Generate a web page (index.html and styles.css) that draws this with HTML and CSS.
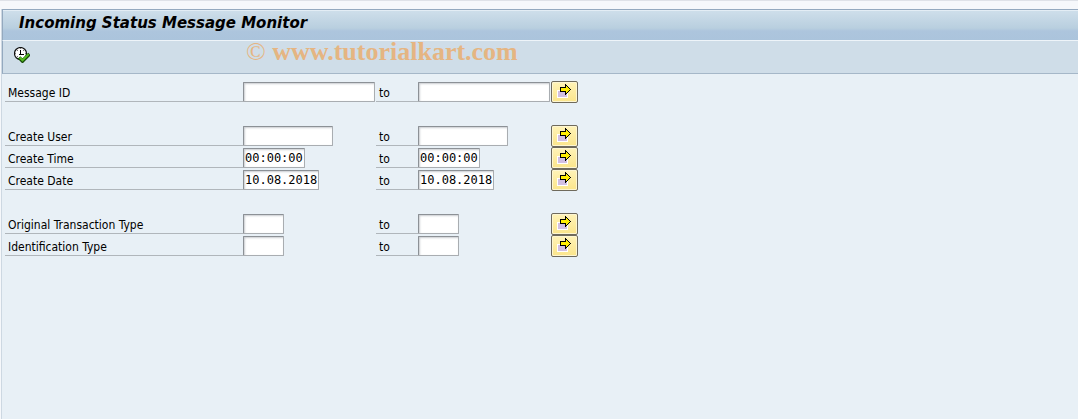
FILE: index.html
```html
<!DOCTYPE html>
<html lang="en">
<head>
  <meta charset="UTF-8" />
  <meta name="viewport" content="width=device-width, initial-scale=1.0"/>
  <title>Incoming Status Message Monitor</title>
  <link rel="stylesheet" href="styles.css">
</head>
<body>
  <svg width="0" height="0" class="sprites" aria-hidden="true">
    <symbol id="arrow" viewBox="0 0 16 16" shape-rendering="crispEdges">
      <path d="M1 7h11v8H1z" fill="#fff"/>
      <path d="M2 8h9v6H2z" fill="#d2bfe2"/>
      <path d="M4 4h5V1h1v1h1v1h1v1h1v1h1v1h1v1h-1v1h-1v1h-1v1h-1v1h-1v1H9V9H4z" fill="#000"/>
      <path d="M5 5h5V3h1v1h1v1h1v1h1v1h-1v1h-1v1h-1v1h-1V8H5z" fill="#ffed00"/>
    </symbol>
  </svg>

  <div class="window">
    <h1 class="title">Incoming Status Message Monitor</h1>
    <div class="toolbar">
      <button class="execute" type="submit" form="selection" aria-label="Execute">
        <svg width="16" height="16" viewBox="0 0 16 16">
          <circle cx="6.5" cy="6.5" r="6" fill="#fff" stroke="#111" stroke-width="1.2"/>
          <path d="M6 1h1v1H6zM1 6h1v1H1zM11 6h1v1h-1zM6 11h1v1H6zM3 3h1v1H3zM9 3h1v1H9zM3 9h1v1H3z" fill="#777"/>
          <path d="M6 3h1v4h3v1H5V7h1z" fill="#000"/>
          <path d="M5 10.500l3.500 3.500 7-7" stroke="#174a08" stroke-width="3.600" fill="none"/>
          <path d="M5.700 10.500l2.800 2.800 6.200-6.200" stroke="#55bd22" stroke-width="2" fill="none"/>
        </svg>
      </button>
      <div class="watermark"><span class="copy">©</span> www.tutorialkart.com</div>
    </div>

    <form class="selection" id="selection">
      <div class="group">
        <div class="row">
          <label class="label" for="msg-from">Message ID</label>
          <div class="cell"><input class="field id" id="msg-from" type="text"></div>
          <label class="to" for="msg-to">to</label>
          <div class="cell"><input class="field id" id="msg-to" type="text"></div>
          <button class="more" type="button" aria-label="Multiple selection for Message ID"><svg width="16" height="16"><use href="#arrow"/></svg></button>
        </div>
      </div>

      <div class="group">
        <div class="row">
          <label class="label" for="user-from">Create User</label>
          <div class="cell"><input class="field user" id="user-from" type="text"></div>
          <label class="to" for="user-to">to</label>
          <div class="cell"><input class="field user" id="user-to" type="text"></div>
          <button class="more" type="button" aria-label="Multiple selection for Create User"><svg width="16" height="16"><use href="#arrow"/></svg></button>
        </div>
        <div class="row">
          <label class="label" for="time-from">Create Time</label>
          <div class="cell"><input class="field time" id="time-from" type="text" value="00:00:00"></div>
          <label class="to" for="time-to">to</label>
          <div class="cell"><input class="field time" id="time-to" type="text" value="00:00:00"></div>
          <button class="more" type="button" aria-label="Multiple selection for Create Time"><svg width="16" height="16"><use href="#arrow"/></svg></button>
        </div>
        <div class="row">
          <label class="label" for="date-from">Create Date</label>
          <div class="cell"><input class="field date" id="date-from" type="text" value="10.08.2018"></div>
          <label class="to" for="date-to">to</label>
          <div class="cell"><input class="field date" id="date-to" type="text" value="10.08.2018"></div>
          <button class="more" type="button" aria-label="Multiple selection for Create Date"><svg width="16" height="16"><use href="#arrow"/></svg></button>
        </div>
      </div>

      <div class="group">
        <div class="row">
          <label class="label" for="trans-from">Original Transaction Type</label>
          <div class="cell"><input class="field type" id="trans-from" type="text"></div>
          <label class="to" for="trans-to">to</label>
          <div class="cell"><input class="field type" id="trans-to" type="text"></div>
          <button class="more" type="button" aria-label="Multiple selection for Original Transaction Type"><svg width="16" height="16"><use href="#arrow"/></svg></button>
        </div>
        <div class="row">
          <label class="label" for="ident-from">Identification Type</label>
          <div class="cell"><input class="field type" id="ident-from" type="text"></div>
          <label class="to" for="ident-to">to</label>
          <div class="cell"><input class="field type" id="ident-to" type="text"></div>
          <button class="more" type="button" aria-label="Multiple selection for Identification Type"><svg width="16" height="16"><use href="#arrow"/></svg></button>
        </div>
      </div>
    </form>
  </div>
</body>
</html>
```
FILE: styles.css
```css
* {
  box-sizing: border-box;
}

body {
  display: flex;
  flex-direction: column;
  min-height: 100vh;
  margin: 0;
  padding: 8px 0 0 1px;
  background-color: #f6f8fb;
  border-top: 1px solid #dfe2e8;
  font-family: Tahoma, "DejaVu Sans Condensed", "DejaVu Sans", sans-serif;
  font-size: 12px;
  color: #000;
}

.sprites {
  position: absolute;
}

.window {
  flex: 1;
  background-color: #e8f0f6;
  border-left: 1px solid #cdd8e2;
}

.title {
  margin: 0;
  height: 32px;
  padding-left: 16px;
  border-top: 1px solid #94a9bf;
  border-left: 1px solid #94a9bf;
  border-bottom: 1px solid #eef4f9;
  box-shadow: inset 0 1px #e3edf5;
  background-image: linear-gradient(#cfdfeb, #b9cfdf 60%, #adc5dd 70%, #abc4dc);
  font-family: Verdana, "DejaVu Sans", sans-serif;
  font-size: 15px;
  font-style: italic;
  font-weight: bold;
  line-height: 27px;
}

.toolbar {
  position: relative;
  display: flex;
  align-items: center;
  height: 33px;
  padding: 0 11px 4px;
  background-color: #cfdde8;
  border-left: 1px solid #94a9bf;
  border-bottom: 1px solid #a5b7c8;
}

.execute {
  width: 16px;
  height: 16px;
  padding: 0;
  border: none;
  background: none;
  cursor: pointer;
}

.execute svg,
.more svg {
  display: block;
}

/* lies over the toolbar, in line with the first input column */
.watermark {
  position: absolute;
  top: -4px;
  left: 243px;
  font-family: "Liberation Serif", serif;
  font-size: 26px;
  font-weight: bold;
  line-height: 30px;
  color: #e5b582;
  white-space: nowrap;
  pointer-events: none;
}

.copy {
  font-weight: normal;
}

.selection {
  display: flex;
  flex-direction: column;
  gap: 22px;
  padding: 7px 3px;
}

.row {
  display: grid;
  grid-template-columns: 238px 133px 42px 133px 27px;
  align-items: center;
  height: 22px;
}

.label,
.to {
  height: 20px;
  padding-left: 3px;
  border-bottom: 1px solid #b0b6bb;
  line-height: 22px;
  white-space: nowrap;
}

.cell {
  display: flex;
}

.field {
  height: 20px;
  padding: 0 0 0 1px;
  border: 1px solid #a9adb1;
  border-top-color: #8c9196;
  border-left-color: #8c9196;
  border-radius: 1px;
  box-shadow: inset 1px 1px 2px #c9ccd0;
  background-color: #fff;
  font-family: "DejaVu Sans Mono", monospace;
  font-size: 12px;
  color: #000;
}

.field:focus {
  outline: none;
  background-color: #fffbd8;
}

.id {
  width: 132px;
}

.user {
  width: 90px;
}

.time {
  width: 62px;
}

.date {
  width: 76px;
}

.type {
  width: 41px;
}

.more {
  height: 22px;
  padding: 1px 5px 3px 4px;
  border: 1px solid #6f6a5c;
  border-radius: 2px;
  box-shadow: inset 0 0 0 1px #fdf6d2;
  background-image: linear-gradient(#fff3b8, #fbe58b);
  cursor: pointer;
}
```
